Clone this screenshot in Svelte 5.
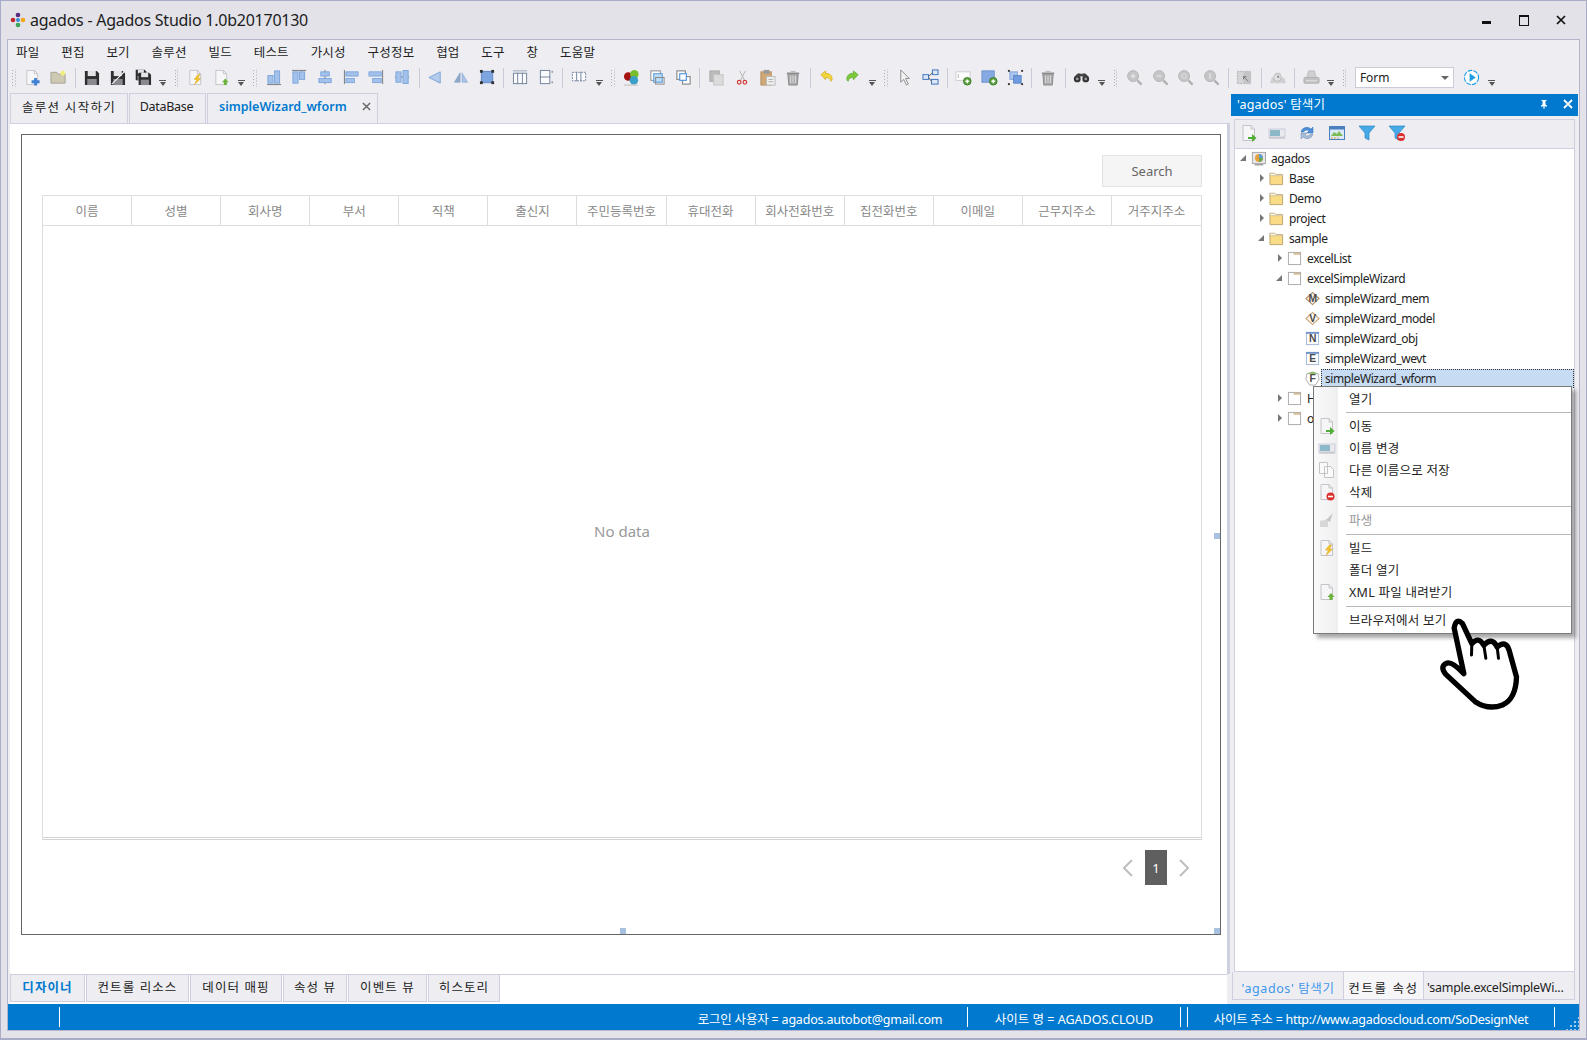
<script>
  const page = (x = '') => `<path d="M3 1.5h8l3.5 3.5v11.5H3z" fill="#f6f6f8" stroke="#c4c4c8"/><path d="M11 1.5v3.5h3.5" fill="none" stroke="#c4c4c8"/>${x}`;
  const floppy = (dx = 0, dy = 0, s = 16) => `<g transform="translate(${dx} ${dy}) scale(${s / 16})"><path d="M1 1h12.5L16 3.5V16H1z" fill="#2e2e30"/><rect x="4" y="1" width="8.5" height="5.5" fill="#e4e4e6"/><rect x="3.5" y="9.5" width="10" height="6.5" fill="#8a8a8e"/></g>`;
  const bar = (x, y, w, h, c = '#a3c1ea') => `<rect x="${x}" y="${y}" width="${w}" height="${h}" fill="${c}" stroke="#6f9dd8" stroke-width=".8"/>`;
  const line = (x1, y1, x2, y2, c = '#555', w = 1) => `<path d="M${x1} ${y1}L${x2} ${y2}" stroke="${c}" stroke-width="${w}" fill="none"/>`;
  const zoomI = (inner = '') => `<circle cx="7.5" cy="7.5" r="5.8" fill="#c5c5c7" stroke="#b5b5b7"/><path d="M12 12l4.5 4.5" stroke="#b0b0b2" stroke-width="2.4"/>${inner}`;
  const twoSq = (a, b) => `<rect x="2" y="2" width="9" height="9" fill="#fff" stroke="${a}" stroke-width="1.2"/><rect x="8" y="8" width="8" height="8" fill="#fff" stroke="${b}" stroke-width="1.2"/>`;

  const icons = {
    new: page(`<path d="M8 13.5h8.5M12.2 9.5v8" stroke="#3f80d2" stroke-width="3"/>`),
    folder: `<path d="M1 3.5h6l1.5 2H16V15H1z" fill="#cdc9b2" stroke="#a5a396"/><circle cx="13.5" cy="4.5" r="2.6" fill="#f2ee7e"/>`,
    save: floppy(1, 1),
    saveas: floppy(1, 1) + line(3, 16, 16, 3, '#f2f2f2', 1.3),
    saveall: floppy(0, 0, 12) + floppy(3, 3, 14),
    build: page(`<path d="M11.5 6l-4 5h3l-2.5 5.5 6.5-6.5h-3l2-4z" fill="#f4c72c" stroke="#d79a1a" stroke-width=".5"/>`),
    fdown: page(`<path d="M9.5 14l3.5-4 3.5 4h-2v3h-3v-3z" fill="#6cb33e"/>`),
    a1: bar(2, 7, 5.5, 8) + bar(9, 2, 5.5, 13) + line(1, 16.5, 16, 16.5, '#777'),
    a2: line(1, 1.5, 16, 1.5, '#777') + bar(2, 3, 5.5, 12) + bar(9, 3, 5.5, 8),
    a3: line(8.5, 1, 8.5, 16, '#777') + bar(4, 3, 9, 4.5) + bar(2, 10, 13, 4.5),
    a4: line(1.5, 1, 1.5, 16, '#777') + bar(3, 3, 13, 4.5) + bar(3, 10, 9, 4.5),
    a5: line(15.5, 1, 15.5, 16, '#777') + bar(1, 3, 13, 4.5) + bar(5, 10, 9, 4.5),
    a6: line(1, 8.5, 16, 8.5, '#777') + bar(2, 3, 5.5, 11) + bar(9.5, 1.5, 5.5, 14),
    t1: `<path d="M14 3v12L2 9z" fill="#b4cbec" stroke="#7ca5da"/>`,
    t2: `<path d="M7.5 4v10H1.5z" fill="#8fa9c9" stroke="#7e9abd" stroke-width=".6"/><path d="M9.5 4v10h6z" fill="#a9c3e8" stroke="#88a6cf" stroke-width=".6"/>`,
    t3: `<rect x="2.5" y="2.5" width="12" height="12" fill="#7ea5e0" stroke="#5c87c6"/><g fill="#333"><rect x="1" y="1" width="3" height="3"/><rect x="13" y="1" width="3" height="3"/><rect x="1" y="13" width="3" height="3"/><rect x="13" y="13" width="3" height="3"/></g>`,
    g1: `<rect x="1.5" y="4.5" width="14" height="11" fill="#fbfbfd" stroke="#70819c"/>` + line(6, 4, 6, 16, '#70819c') + line(11, 4, 11, 16, '#70819c') + line(1, 2, 16, 2, '#9aa7ba'),
    g2: `<rect x="2.5" y="1.5" width="10" height="14" fill="#fbfbfd" stroke="#70819c"/>` + line(2, 8.5, 13, 8.5, '#70819c') + line(15, 2, 15, 4, '#666') + line(15, 13, 15, 15, '#666'),
    g3: `<rect x="1.5" y="3.5" width="14" height="9" fill="#fbfbfd" stroke="#70819c" stroke-dasharray="2 1"/>` + line(6, 3, 6, 13, '#70819c') + line(10.5, 3, 10.5, 13, '#70819c'),
    balls: `<circle cx="5.5" cy="8" r="4.5" fill="#a51212"/><circle cx="12" cy="5.5" r="4.5" fill="#79bd2c"/><circle cx="11.5" cy="12" r="4.5" fill="#3a9fc6"/><path d="M1 17h15" stroke="#bbb"/>`,
    copy1: `<rect x="2" y="2" width="10" height="10" fill="#fff" stroke="#888"/><rect x="5" y="5" width="9" height="9" fill="#bcdcf6" stroke="#4d92d6"/><rect x="7" y="9" width="9" height="7" fill="none" stroke="#888"/>`,
    copy2: twoSq('#888', '#888') + `<rect x="5" y="5" width="7" height="7" fill="#fff" stroke="#4d92d6" stroke-width="1.2"/>`,
    copy: `<rect x="2" y="2" width="10" height="11" fill="#bbb" stroke="#aaa"/><rect x="6" y="6" width="10" height="11" fill="#dcdcdc" stroke="#c4c4c4"/>`,
    cut: `<path d="M6 2l5 10M12 2L7 12" stroke="#bbb" stroke-width="1.1"/><circle cx="5.5" cy="14" r="1.9" fill="none" stroke="#d43a3a" stroke-width="1.3"/><circle cx="11.5" cy="14" r="1.9" fill="none" stroke="#d43a3a" stroke-width="1.3"/>`,
    paste: `<rect x="2" y="3" width="11" height="14" fill="#cfa875" stroke="#b59060"/><rect x="5" y="1" width="6" height="4" fill="#999"/><rect x="8" y="8" width="9" height="9" fill="#f0f0f0" stroke="#bbb"/><path d="M10 11h5M10 13.5h5" stroke="#aaa"/>`,
    trash: `<path d="M3 5h11l-1 12H4z" fill="#a9a9ab" stroke="#8a8a8c"/><path d="M2 4.5h13" stroke="#888" stroke-width="1.5"/><rect x="6" y="2" width="5" height="2" fill="#bbb"/><path d="M6 7v8M8.5 7v8M11 7v8" stroke="#e0e0e0"/>`,
    undo: `<path d="M3 6l5-4v2.5c4 0 7 2 7 6 0 1.5-1 2.5-1.5 2.5 0-2.5-2-4-5.500-4v2.500z" fill="#f4d53b" stroke="#c9a520" stroke-width=".7"/>`,
    redo: `<path d="M15 6l-5-4v2.5c-4 0-7 2-7 6 0 1.5 1 2.5 1.5 2.5 0-2.5 2-4 5.500-4v2.500z" fill="#7cc83b" stroke="#5aa528" stroke-width=".7"/>`,
    cursor: `<path d="M4 1v13l3-3 3 6 2-1-3-6h4z" fill="#f2f2f2" stroke="#8a8a8c"/>`,
    tree: `<rect x="11" y="1" width="6" height="5" fill="#dbe6f7" stroke="#3a6fc0"/><rect x="1" y="6" width="6" height="5" fill="#dbe6f7" stroke="#3a6fc0"/><rect x="10" y="11" width="7" height="5" fill="#dbe6f7" stroke="#3a6fc0"/><path d="M7 8l4-4M7 9l3 4" stroke="#555"/>`,
    addbox: `<rect x="1" y="3" width="15" height="9" fill="#fff" stroke="#ccc"/><path d="M3.5 5.5v4" stroke="#aaa"/><circle cx="13" cy="13" r="4" fill="#5aa33e" stroke="#3d7a2a"/><path d="M11 13h4M13 11v4" stroke="#fff" stroke-width="1.4"/>`,
    addsq: `<rect x="1" y="2" width="13" height="12" fill="#86a9e2" stroke="#6c90c9"/><circle cx="13" cy="13" r="4" fill="#5aa33e" stroke="#3d7a2a"/><path d="M11 13h4M13 11v4" stroke="#fff" stroke-width="1.4"/>`,
    group: `<rect x="3" y="3" width="8" height="8" fill="#a9c5ee" stroke="#86a6d8"/><rect x="7" y="7" width="8" height="8" fill="#6f9ce0" stroke="#5c87c6"/><g fill="#333"><rect x="1" y="1" width="2" height="2"/><rect x="15" y="1" width="2" height="2"/><rect x="1" y="15" width="2" height="2"/><rect x="15" y="15" width="2" height="2"/></g>`,
    find: `<circle cx="4.5" cy="10.5" r="3.6" fill="#333"/><circle cx="13.5" cy="10.5" r="3.6" fill="#333"/><path d="M2 8q3-5 6-3h2q3-2 6 3z" fill="#444"/><circle cx="4.5" cy="10.5" r="1.5" fill="#999"/><circle cx="13.5" cy="10.5" r="1.5" fill="#999"/>`,
    z1: zoomI(`<path d="M5 7.5h5M7.5 5v5" stroke="#e6e6e6" stroke-width="1.4"/>`),
    z2: zoomI(`<path d="M5 7.5h5" stroke="#e6e6e6" stroke-width="1.4"/>`),
    z3: zoomI(`<circle cx="7.5" cy="7.5" r="2.5" fill="none" stroke="#e0e0e0"/>`),
    z4: zoomI(`<path d="M7.5 4.5v6" stroke="#e6e6e6" stroke-width="1.4"/>`),
    shot: `<rect x="1.5" y="2.5" width="14" height="13" fill="#d5d5d7" stroke="#b0b0b2" stroke-dasharray="2 1"/><rect x="8" y="2.5" width="7.5" height="13" fill="#c4c4c6"/><path d="M8 8l5 5M8 8h3M8 8v3" stroke="#777"/>`,
    clock: `<path d="M1 15l2-6h3l1-5h5l1 5h3l2 6z" fill="#d0d0d2"/><circle cx="9" cy="9" r="4" fill="#e2e2e4" stroke="#bbb"/><path d="M9 7v2h2" stroke="#aaa"/>`,
    print: `<path d="M6 2h6l2 7H4z" fill="#cfcfd1" stroke="#bbb"/><rect x="1" y="9" width="16" height="6" rx="1" fill="#c2c2c4" stroke="#b0b0b2"/><path d="M3 12.5h12" stroke="#e4e4e4"/>`,
    play: `<circle cx="9" cy="9" r="7.5" fill="#fff" stroke="#1f9ee8" stroke-width="1.2" stroke-dasharray="5 1.2"/><path d="M7 4.5l6.5 4.5L7 13.5z" fill="#1f9ee8"/>`,
    move: page(`<path d="M8 13h4v-3l4.5 4-4.5 4v-3H8z" fill="#4fae36"/>`),
    rename: `<rect x="1" y="5" width="16" height="8" fill="#e8eaee" stroke="#ccd"/><rect x="2" y="6" width="10" height="6" fill="#8cb8c8"/><path d="M1 14h16" stroke="#b5b5bb"/>`,
    saveasg: `<path d="M1.5 1.5h8v11h-8zM6.5 5.5h6l3 3v8h-9z" fill="#fafafa" stroke="#c4c4c8"/>`,
    del: page(`<circle cx="12.5" cy="13.5" r="4" fill="#dc3030"/><path d="M10 13.5h5" stroke="#fff" stroke-width="1.6"/>`),
    derive: `<path d="M2 10l8-2v8H2z" fill="#d8d8d8"/><path d="M8 9l7-7-3 9z" fill="#c8c8c8"/>`,
    refresh: `<path d="M3 8a6 6 0 0 1 10-3l2-2v6h-6l2-2a3.5 3.5 0 0 0-5.5 1z" fill="#4f8fd8" stroke="#2f6fb8" stroke-width=".5"/><path d="M15 10a6 6 0 0 1-10 3l-2 2V9h6l-2 2a3.5 3.5 0 0 0 5.5-1z" fill="#a8bcd4" stroke="#6f8fb8" stroke-width=".5"/>`,
    win: `<rect x="1.5" y="2.5" width="15" height="13" fill="#dbeaf8" stroke="#4a7fc0"/><rect x="2" y="3" width="14" height="2.5" fill="#4a7fc0"/><path d="M3 12l3-4 3 2 2-3 4 5z" fill="#7dbb55"/><path d="M3 14h2M6 14h2M9 14h2" stroke="#e0a030"/>`,
    filter: `<path d="M1 2h16l-6 7v7l-4-2V9z" fill="#47a9e6" stroke="#2a86c6" stroke-width=".7"/>`,
    filterx: `<path d="M1 2h16l-6 7v7l-4-2V9z" fill="#47a9e6" stroke="#2a86c6" stroke-width=".7"/><circle cx="13" cy="13" r="4" fill="#dc3030"/><path d="M10.5 13h5" stroke="#fff" stroke-width="1.6"/>`,
    proj: `<rect x="1.5" y="1.5" width="14" height="12" fill="#e8e8ea" stroke="#a5a5a8"/><circle cx="8.5" cy="7.5" r="4.2" fill="#e5a03a"/><path d="M8.5 7.5V3.3a4.2 4.2 0 0 1 4.2 4.2z" fill="#5a9fd6"/><path d="M8.5 7.5h4.2a4.2 4.2 0 0 1-4.2 4.2z" fill="#6aa84f"/><rect x="4" y="13.5" width="9" height="2" fill="#a5a5a8"/>`,
    yfolder: `<path d="M1 2.5h5l1.2 1.2h6.6a1 1 0 0 1 .7 1V14.5H1z" fill="#fbdc86" stroke="#b9a36c"/><path d="M1 2.5h5l1.2 1.2h7.3v1.3H1z" fill="#f9f9f3" stroke="#b9a36c" stroke-width=".6"/>`,
    wfolder: `<rect x="1.5" y="1.5" width="13" height="13" fill="#fff" stroke="#a8a8aa"/><rect x="7" y="2" width="7" height="2" fill="#d8bd92"/>`
  };

  const letter = (l, shape) => `${shape}<text x="8" y="12" text-anchor="middle" font-family="Liberation Sans" font-weight="700" font-size="11" fill="#4a4a4a">${l}</text>`;
  const diamond = (c) => `<path d="M8 1.5l7 6.5-7 6.5L1 8z" fill="#fbf6ee" stroke="${c}" stroke-width="1.2"/>`;
  icons.M = letter('M', diamond('#b08a60'));
  icons.V = letter('V', diamond('#c9a676'));
  const sq = (c) => `<rect x="1.5" y="1.5" width="13" height="13" fill="#fff" stroke="#9fb5d6"/><rect x="1" y="1" width="14" height="2" fill="${c}"/>`;
  icons.N = letter('N', sq('#6f93c8'));
  icons.E = letter('E', sq('#6f93c8'));
  icons.F = letter('F', `<path d="M2 3l6-2 6 2 1 6-4 6H5L1 9z" fill="#fff" stroke="#aaa"/><path d="M2 3l6-2 6 2z" fill="#7bb44c"/>`);

  const toolbar = 'grip new folder sep save saveas saveall drop grip build fdown drop grip a1 a2 a3 a4 a5 a6 sep t1 t2 t3 sep g1 g2 sep g3 drop grip balls copy1 copy2 sep copy cut paste trash sep undo redo drop grip cursor tree sep addbox addsq group sep trash sep find drop grip z1 z2 z3 z4 sep shot sep clock sep print drop grip combo play drop'.split(' ');
  const menus = ['파일', '편집', '보기', '솔루션', '빌드', '테스트', '가시성', '구성정보', '협업', '도구', '창', '도움말'];
  const columns = ['이름', '성별', '회사명', '부서', '직책', '출신지', '주민등록번호', '휴대전화', '회사전화번호', '집전화번호', '이메일', '근무지주소', '거주지주소'];
  const tree = [
    { d: 0, a: 'open', i: 'proj', t: 'agados' },
    { d: 1, a: 'closed', i: 'yfolder', t: 'Base' },
    { d: 1, a: 'closed', i: 'yfolder', t: 'Demo' },
    { d: 1, a: 'closed', i: 'yfolder', t: 'project' },
    { d: 1, a: 'open', i: 'yfolder', t: 'sample' },
    { d: 2, a: 'closed', i: 'wfolder', t: 'excelList' },
    { d: 2, a: 'open', i: 'wfolder', t: 'excelSimpleWizard' },
    { d: 3, i: 'M', t: 'simpleWizard_mem' },
    { d: 3, i: 'V', t: 'simpleWizard_model' },
    { d: 3, i: 'N', t: 'simpleWizard_obj' },
    { d: 3, i: 'E', t: 'simpleWizard_wevt' },
    { d: 3, i: 'F', t: 'simpleWizard_wform', sel: true },
    { d: 2, a: 'closed', i: 'wfolder', t: 'HTML' },
    { d: 2, a: 'closed', i: 'wfolder', t: 'other' }
  ];
  const ctx = [
    { t: '열기' }, { s: 1 },
    { t: '이동', i: 'move' }, { t: '이름 변경', i: 'rename' }, { t: '다른 이름으로 저장', i: 'saveasg' }, { t: '삭제', i: 'del' }, { s: 1 },
    { t: '파생', i: 'derive', off: 1 }, { s: 1 },
    { t: '빌드', i: 'build' }, { t: '폴더 열기' }, { t: 'XML 파일 내려받기', i: 'fdown' }, { s: 1 },
    { t: '브라우저에서 보기' }
  ];
  const docTabs = ['솔루션 시작하기', 'DataBase', 'simpleWizard_wform'];
  const bottomTabs = ['디자이너', '컨트롤 리소스', '데이터 매핑', '속성 뷰', '이벤트 뷰', '히스토리'];
  const panelTools = ['move', 'rename', 'refresh', 'win', 'filter', 'filterx'];
</script>

<div class="window">
  <header class="title">
    <svg class="logo" viewBox="0 0 16 16" width="16" height="16">
      <circle cx="8" cy="3" r="2.3" fill="#5a2a82" /><circle cx="3" cy="8" r="2.3" fill="#c0272d" />
      <circle cx="13" cy="8" r="2.3" fill="#f2a71b" /><circle cx="8" cy="13" r="2.3" fill="#3aa655" />
      <circle cx="8" cy="8" r="2" fill="#3a8fd6" />
    </svg>
    <span class="title-text">agados - Agados Studio 1.0b20170130</span>
    <div class="winbtns">
      <span class="min"></span><span class="max"></span>
      <svg viewBox="0 0 10 10" width="10" height="10"><path d="M1 1l8 8M9 1l-8 8" stroke="#111" stroke-width="1.7" /></svg>
    </div>
  </header>

  <div class="frame">
    <nav class="menu">
      {#each menus as m}<span>{m}</span>{/each}
    </nav>

    <div class="toolbar">
      {#each toolbar as t}
        {#if t === 'grip'}<span class="grip"></span>
        {:else if t === 'sep'}<span class="sep"></span>
        {:else if t === 'drop'}<span class="drop"><i></i><b></b></span>
        {:else if t === 'combo'}<span class="combo">Form<b></b></span>
        {:else}<span class="tool"><svg viewBox="0 0 18 18" width="17" height="17">{@html icons[t]}</svg></span>
        {/if}
      {/each}
    </div>

    <div class="work">
      <section class="docs">
        <div class="tabs">
          {#each docTabs as t, n}
            <div class="tab" class:on={n === 2}>{t}{#if n === 2}<svg class="x" viewBox="0 0 10 10" width="9" height="9"><path d="M1 1l8 8M9 1l-8 8" stroke="#666" stroke-width="1.6" /></svg>{/if}</div>
          {/each}
        </div>
        <div class="canvas">
          <div class="form">
            <div class="searchrow"><button>Search</button></div>
            <div class="grid">
              <div class="ghead">{#each columns as c}<div>{c}</div>{/each}</div>
              <div class="gbody">No data</div>
            </div>
            <div class="pager">
              <svg viewBox="0 0 14 20" width="14" height="20"><path d="M11 2L3 10l8 8" fill="none" stroke="#bdbdbd" stroke-width="2" /></svg>
              <span class="page">1</span>
              <svg viewBox="0 0 14 20" width="14" height="20"><path d="M3 2l8 8-8 8" fill="none" stroke="#bdbdbd" stroke-width="2" /></svg>
            </div>
            <span class="h h-r"></span><span class="h h-b"></span><span class="h h-c"></span>
          </div>
        </div>
        <div class="btabs">
          {#each bottomTabs as t, n}<div class="btab b{n}" class:on={n === 0}>{t}</div>{/each}
        </div>
      </section>

      <aside class="panel">
        <div class="phead">
          <span>'agados' 탐색기</span>
          <svg viewBox="0 0 10 10" width="10" height="10"><path d="M2.5 1h5v1h-1v3.5l1.5 1v1H5.5V10h-1V7.500H2v-1l1.500-1V2h-1z" fill="#fff" /></svg>
          <svg viewBox="0 0 10 10" width="10" height="10"><path d="M1 1l8 8M9 1l-8 8" stroke="#fff" stroke-width="1.8" /></svg>
        </div>
        <div class="ptools">
          {#each panelTools as t}<span class="ptool"><svg viewBox="0 0 18 18" width="18" height="18">{@html icons[t]}</svg></span>{/each}
        </div>
        <div class="tree">
          {#each tree as r}
            <div class="row" style="padding-left:{4 + r.d * 18}px">
              <span class="arrow {r.a ?? ''}"></span>
              <svg class="ti" viewBox="0 0 16 16" width="15" height="15">{@html icons[r.i]}</svg>
              <span class="label" class:sel={r.sel}>{r.t}</span>
            </div>
          {/each}
        </div>
        <div class="ptabs">
          <div class="ptab p0 on">'agados' 탐색기</div>
          <div class="ptab p1">컨트롤 속성</div>
          <div class="ptab p2">'sample.excelSimpleWi...</div>
        </div>
      </aside>
    </div>

    <footer class="status">
      <span class="bar first"></span>
      <span class="spacer"></span>
      <span class="st s1">로그인 사용자 = agados.autobot@gmail.com</span>
      <span class="bar"></span>
      <span class="st s2">사이트 명 = AGADOS.CLOUD</span>
      <span class="bar gap"></span>
      <span class="bar"></span>
      <span class="st s3">사이트 주소 = http://www.agadoscloud.com/SoDesignNet</span>
      <span class="bar"></span>
      <span class="resize"></span>
    </footer>
  </div>

  <div class="ctx">
    {#each ctx as c}
      {#if c.s}<div class="csep"></div>
      {:else}
        <div class="citem" class:off={c.off}>
          <span class="cico">{#if c.i}<svg viewBox="0 0 18 18" width="18" height="18">{@html icons[c.i]}</svg>{/if}</span>
          <span>{c.t}</span>
        </div>
      {/if}
    {/each}
  </div>

  <svg class="hand" viewBox="440 700 260 300" width="87" height="100">
    <path d="M497 745Q503 712 522 732L550 792Q570 768 586 797Q610 770 626 802Q652 780 662 812L684 892Q682 958 642 976Q600 992 560 966L472 884Q452 860 476 850Q492 846 526 882Z" fill="#fff" stroke="#000" stroke-width="16" stroke-linejoin="round" />
    <path d="M550 792L549 826M586 797L592 836M626 802L630 836" fill="none" stroke="#000" stroke-width="9" stroke-linecap="round" />
  </svg>
</div>

<style>
  :global(body) { margin: 0; background: #e2e2e8; }
  .window {
    position: relative; width: 1587px; height: 1040px; box-sizing: border-box;
    display: flex; flex-direction: column; overflow: hidden;
    background: #e2e2e8; border: 1px solid #a9acc9; border-bottom-width: 2px; border-right-width: 1px;
    font-family: "Noto Sans", "Noto Sans CJK KR", sans-serif; font-size: 12px; color: #222;
  }
  .title { height: 38px; flex: none; display: flex; align-items: center; padding-left: 9px; }
  .logo { margin-right: 4px; }
  .title-text { font-size: 16px; color: #1c1c1c; letter-spacing: -.25px; }
  .winbtns { margin-left: auto; display: flex; align-items: center; width: 84px; justify-content: space-between; margin-right: 20px; }
  .min { width: 9px; height: 3px; background: #111; margin-top: 4px; }
  .max { width: 8px; height: 8px; border: 1px solid #111; border-top-width: 2px; }

  .frame {
    flex: 1; min-height: 0; margin: 0 6px 7px 6px; border: 1px solid #b5b5cd; background: #eeeef2;
    display: flex; flex-direction: column;
  }
  .menu { height: 24px; box-sizing: border-box; padding: 0 0 2px 8px; flex: none; display: flex; align-items: center; gap: 21.8px; font-size: 12.5px; letter-spacing: .2px; }
  .toolbar { height: 29px; box-sizing: border-box; padding-bottom: 2px; flex: none; display: flex; align-items: center; margin-left: -1px; }
  .tool { width: 25.7px; height: 22px; display: flex; align-items: center; justify-content: center; flex: none; }
  .sep { width: 7.5px; height: 20px; flex: none; background: linear-gradient(#c9cada, #c9cada) center / 1px 100% no-repeat; }
  .grip { width: 13px; height: 18px; flex: none; background: radial-gradient(circle, #a9a9b0 .7px, transparent .9px) 4px 0 / 3px 3px repeat-y, radial-gradient(circle, #a9a9b0 .7px, transparent .9px) 6.5px 1.5px / 3px 3px repeat-y; }
  .drop { width: 14px; height: 18px; flex: none; display: flex; flex-direction: column; align-items: center; justify-content: flex-end; gap: 1px; padding-bottom: 1px; box-sizing: border-box; }
  .drop i { width: 7px; height: 1px; background: #555; }
  .drop b { width: 0; height: 0; border: 3.5px solid transparent; border-top: 4px solid #555; border-bottom: 0; }
  .combo { width: 99px; height: 21px; flex: none; box-sizing: border-box; margin: 0 5px 0 4px; background: #fff; border: 1px solid #ccccd9; padding-left: 4px; display: flex; align-items: center; position: relative; color: #222; }
  .combo b { position: absolute; right: 4px; top: 8px; border: 4px solid transparent; border-top: 4px solid #666; border-bottom: 0; }

  .work { flex: 1; min-height: 0; display: flex; }
  .docs { width: 1223px; flex: none; display: flex; flex-direction: column; }
  .tabs { height: 30px; flex: none; display: flex; padding-left: 2px; gap: 1px; }
  .tab { box-sizing: border-box; height: 30px; display: flex; align-items: center; padding: 0 11px 4px; border: 1px solid #cfd0df; border-bottom: 0; font-size: 12.5px; letter-spacing: -.3px; }
  .tab:nth-child(1) { width: 118px; justify-content: center; padding: 0 0 4px; letter-spacing: 1.3px; }
  .tab:nth-child(2) { width: 77px; justify-content: center; padding: 0 2px 4px 0; }
  .tab.on { width: 171px; color: #0079cf; font-weight: 600; letter-spacing: 0; }
  .x { margin-left: auto; margin-right: -5px; }

  .canvas { flex: 1; min-height: 0; background: #fff; margin-left: 2px; margin-right: 1px; padding: 10px 6px 39px 11px; border-top: 1px solid #cfd0df; border-right: 3px solid #cfd0df; box-sizing: border-box; display: flex; }
  .form { position: relative; flex: 1; border: 1px solid #666; padding: 20px 18px 0 20px; box-sizing: border-box; display: flex; flex-direction: column; }
  .searchrow { display: flex; justify-content: flex-end; }
  button { width: 100px; height: 32px; background: #f5f5f5; border: 1px solid #e3e3e3; color: #666; font: 13px "Noto Sans", sans-serif; padding: 0; }
  .grid { margin-top: 8px; height: 645px; flex: none; border: 1px solid #ddd; border-bottom: 3px double #d4d4d4; display: flex; flex-direction: column; box-sizing: border-box; }
  .ghead { height: 30px; flex: none; display: grid; grid-template-columns: repeat(13, 1fr); border-bottom: 1px solid #ddd; box-sizing: border-box; }
  .ghead div { display: flex; align-items: center; justify-content: center; color: #888; font-size: 12.5px; border-right: 1px solid #ddd; padding-bottom: 1px; }
  .ghead div:last-child { border-right: 0; }
  .gbody { flex: 1; display: flex; align-items: center; justify-content: center; padding-bottom: 2px; color: #999; font-size: 15px; }
  .pager { display: flex; align-items: center; justify-content: flex-end; gap: 10px; margin-top: 10px; padding-right: 11px; }
  .page { width: 22px; height: 35px; background: #5f5f5f; color: #fff; display: flex; align-items: center; justify-content: center; font-size: 13px; }
  .h { position: absolute; width: 6px; height: 6px; background: #a9c1e0; }
  .h-r { right: 0; top: 398px; }
  .h-b { left: 598px; bottom: 0; }
  .h-c { right: 0; bottom: 0; }

  .btabs { height: 30px; flex: none; display: flex; gap: 1px; background: #fff; margin: 0 4px 0 2px; border-top: 1px solid #cfd0df; box-sizing: border-box; }
  .btab { height: 27px; box-sizing: border-box; display: flex; align-items: center; justify-content: center; padding-bottom: 3px; background: #eeeef2; border: 1px solid #cfd0df; border-top: 0; font-size: 12.5px; letter-spacing: 1.1px; }
  .btab.on { color: #0079cf; font-weight: 600; }
  .b0 { width: 75px; } .b1 { width: 103px; } .b2 { width: 92px; } .b3 { width: 64px; } .b4 { width: 79px; } .b5 { width: 72px; }

  .panel { flex: 1; min-width: 0; display: flex; flex-direction: column; margin-right: 1px; }
  .phead { height: 22px; margin-top: 1px; flex: none; box-sizing: border-box; padding: 0 5px 3px 6px; background: #0079cf; color: #fff; display: flex; align-items: center; gap: 14px; font-size: 12.5px; letter-spacing: .2px; }
  .phead span { margin-right: auto; }
  .ptools { height: 30px; flex: none; margin: 3px 3px 0; border: 1px solid #cfd0df; box-sizing: border-box; display: flex; align-items: center; padding: 0 0 2px 1px; }
  .ptool { width: 30px; display: flex; justify-content: center; }
  .ptool:first-child { width: 26px; }
  .tree { flex: 1; min-height: 0; margin: 0 3px; background: #fff; border: 1px solid #cfd0df; border-top: 0; display: flex; flex-direction: column; letter-spacing: -.4px; }
  .row { height: 20px; flex: none; display: flex; align-items: center; }
  .row:first-child { margin-top: -1px; }
  .arrow { width: 12px; flex: none; height: 8px; position: relative; }
  .arrow.closed::after { content: ''; position: absolute; left: 3px; top: 0; border: 4px solid transparent; border-left: 4px solid #777; border-right: 0; }
  .arrow.open::after { content: ''; position: absolute; left: 1px; top: 1px; border-bottom: 6px solid #777; border-left: 6px solid transparent; }
  .ti { flex: none; width: 15px; margin-right: 4px; }
  .label { flex: 1; line-height: 17px; padding-left: 3px; margin-left: -3px; border: 1px dotted transparent; white-space: nowrap; overflow: hidden; }
  .label.sel { background: #c7dcf3; border-color: #333; }
  .ptabs { height: 28px; flex: none; display: flex; margin: 0 3px 4px 1px; border: 1px solid #cfd0df; border-top: 0; box-sizing: border-box; }
  .ptab { display: flex; align-items: center; justify-content: center; box-sizing: border-box; padding-top: 4px; background: #f6f6f9; border-right: 1px solid #cfd0df; font-size: 12.5px; white-space: nowrap; overflow: hidden; }
  .ptab.on { color: #3f97ec; background: #eeeef2; }
  .p0 { width: 111px; letter-spacing: .6px; } .p1 { width: 80px; letter-spacing: 1.6px; } .p2 { flex: 1; border-right: 0; background: #eeeef2; letter-spacing: -.25px; justify-content: flex-start; padding-left: 3px; }

  .status { height: 26px; flex: none; background: #0079cf; color: #fff; display: flex; align-items: center; font-size: 12.5px; position: relative; }
  .bar { width: 1px; height: 20px; background: #fff; flex: none; }
  .first { margin-left: 51px; }
  .spacer { flex: 1; }
  .st { flex: none; white-space: nowrap; text-align: center; padding-top: 2px; }
  .s1 { width: 294px; letter-spacing: -.2px; }
  .s2 { width: 212px; }
  .gap { margin-right: 6px; }
  .s3 { width: 366px; letter-spacing: -.3px; }
  .resize { width: 24px; height: 26px; flex: none; background: radial-gradient(circle, #a9d0ee .7px, transparent .9px) right 2px bottom 2px / 4px 4px; clip-path: polygon(100% 45%, 100% 100%, 45% 100%); }

  .ctx { position: absolute; left: 1312px; top: 385px; width: 259px; height: 248px; box-sizing: border-box; background: linear-gradient(90deg, #fafafa 0, #efefef 24px, #fff 24px); border: 1px solid #7a7a7a; box-shadow: 4px 4px 4px rgba(0,0,0,.35); font-size: 12.5px; letter-spacing: .25px; }
  .citem { height: 22px; display: flex; align-items: center; }
  .citem.off { color: #999; }
  .cico { width: 35px; flex: none; display: flex; justify-content: center; padding-right: 9px; box-sizing: border-box; }
  .csep { height: 1px; margin: 2.6px 0 2.4px 32px; background: #b8b8b8; }
  .hand { position: absolute; left: 1434px; top: 612px; }
</style>
